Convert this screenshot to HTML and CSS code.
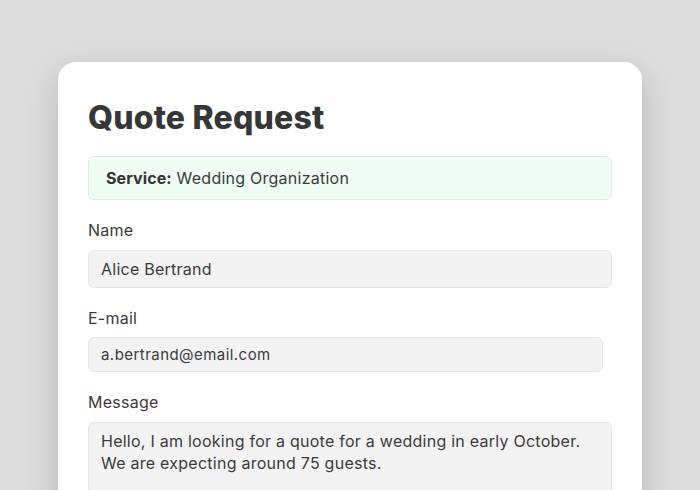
FILE: index.html
```html
<!DOCTYPE html>
<html lang="en">
<head>
    <meta charset="UTF-8">
    <title>Quote Request</title>
    <link rel="stylesheet" href="styles.css">
</head>
<body>
<div class="card">
    <h1 class="title">Quote Request</h1>

    <div class="service">
        <strong>Service:</strong> Wedding Organization
    </div>

    <form class="quote-form">
        <label class="field-label" for="name">Name</label>
        <input class="field" id="name" type="text" value="Alice Bertrand">

        <label class="field-label" for="email">E-mail</label>
        <input class="field field-email" id="email" type="email" value="a.bertrand@email.com">

        <label class="field-label" for="message">Message</label>
        <textarea class="field field-message" id="message" rows="5">Hello, I am looking for a quote for a wedding in early October. We are expecting around 75 guests.</textarea>
    </form>
</div>
</body>
</html>
```

FILE: styles.css
```css
html, body {
    margin: 0;
    padding: 0;
}

body {
    background-color: #dcdcdc;
    font-family: Inter, "Noto Sans", sans-serif;
    color: #3b3b3b;
    padding-top: 62px;
    height: 490px;
    overflow: hidden;
    box-sizing: border-box;
}

.card {
    width: 584px;
    margin: 0 auto;
    box-sizing: border-box;
    padding: 36px 30px 40px;
    background-color: #fff;
    border-radius: 18px;
    box-shadow: 0 12px 32px rgba(0, 0, 0, 0.16);
    min-height: 600px;
}

.title {
    margin: 0 0 19px;
    font-size: 32px;
    font-weight: 800;
    letter-spacing: 0.2px;
    color: #363636;
}

.service {
    padding: 11px 17px;
    font-size: 16px;
    letter-spacing: 0.25px;
    background-color: #effcf3;
    border: 1px solid #dfe9e2;
    border-radius: 6px;
}

.service strong {
    font-weight: 700;
    letter-spacing: 0.1px;
    color: #333;
}

.quote-form {
    display: flex;
    flex-direction: column;
    align-items: flex-start;
    padding-top: 20px;
}

.field-label {
    font-size: 16px;
    letter-spacing: 0.25px;
    color: #3b3b3b;
    margin-bottom: 9.5px;
}

.field {
    width: 100%;
    box-sizing: border-box;
    margin: 0 0 20px;
    padding: 8px 12px;
    font-family: inherit;
    font-size: 16px;
    letter-spacing: 0.25px;
    color: #3b3b3b;
    background-color: #f2f2f2;
    border: 1px solid #e6e6e6;
    border-radius: 6px;
    outline: none;
}

.field-email {
    width: 515px;
    padding: 7px 12px;
    font-size: 15px;
    letter-spacing: 0.45px;
}

.field-message {
    height: 120px;
    padding: 7px 12px;
    line-height: 22px;
    resize: none;
}
```
